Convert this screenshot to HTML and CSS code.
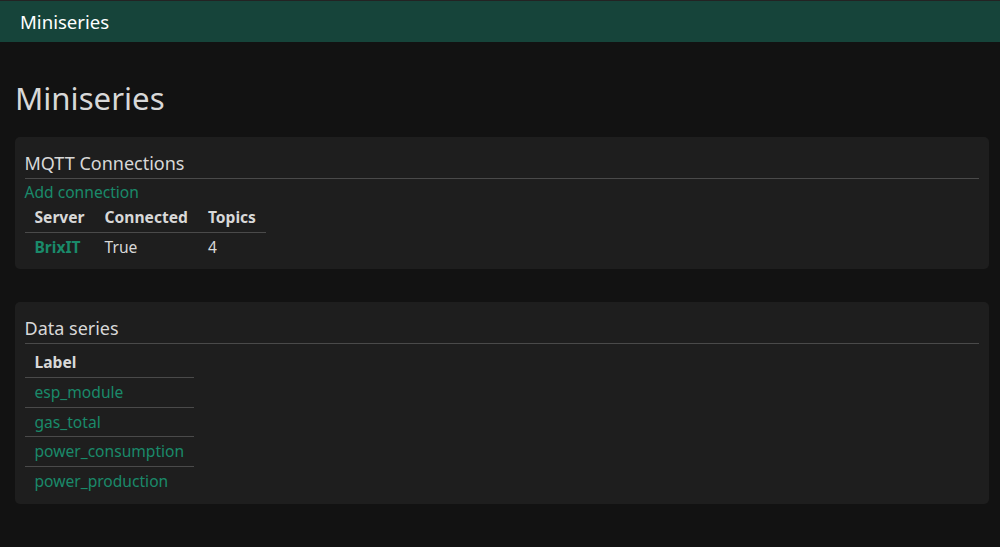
FILE: index.html
```html
<!DOCTYPE html>
<html>
<head>
<meta charset="utf-8">
<link rel="stylesheet" href="styles.css">
</head>
<body>
<header class="topbar"><span class="brand">Miniseries</span></header>
<main class="content">
  <h1 class="title">Miniseries</h1>
  <section class="card">
    <h2 class="card-title">MQTT Connections</h2>
    <a class="link add" href="#">Add connection</a>
    <table class="tbl">
      <thead><tr><th>Server</th><th>Connected</th><th>Topics</th></tr></thead>
      <tbody><tr><td><a class="link strong" href="#">BrixIT</a></td><td>True</td><td>4</td></tr></tbody>
    </table>
  </section>
  <section class="card">
    <h2 class="card-title">Data series</h2>
    <table class="tbl lines">
      <thead><tr><th>Label</th></tr></thead>
      <tbody>
        <tr><td><a class="link" href="#">esp_module</a></td></tr>
        <tr><td><a class="link" href="#">gas_total</a></td></tr>
        <tr><td><a class="link" href="#">power_consumption</a></td></tr>
        <tr><td><a class="link" href="#">power_production</a></td></tr>
      </tbody>
    </table>
  </section>
</main>
</body>
</html>
```
FILE: styles.css
```css
html, body { margin: 0; padding: 0; }
body {
  background: #121212;
  color: #d8d8d8;
  font-family: "Noto Sans", "Open Sans", sans-serif;
  font-size: 15.6px;
  line-height: 24px;
}
.topbar {
  height: 41px;
  border-top: 1px solid #232323;
  background: #16443a;
  display: flex;
  align-items: center;
  padding-left: 20px;
}
.brand { color: #ffffff; font-size: 18.6px; }
.content { padding: 37px 11px 20px 15px; }
.title {
  margin: 0 0 20px 0;
  font-size: 31.2px;
  font-weight: 400;
  line-height: 38px;
  color: #d8d8d8;
}
.card {
  background: #1e1e1e;
  border-radius: 5px;
  padding: 10px 10px 7px 9.5px;
  margin-bottom: 33px;
}
.card-title {
  margin: 0;
  font-size: 18px;
  font-weight: 400;
  line-height: 27px;
  padding-top: 3px;
  padding-bottom: 1px;
  border-bottom: 1px solid #4a4a4a;
  color: #d8d8d8;
}
.link { color: #1a8a6a; text-decoration: none; }
.add { display: inline-block; padding-top: 1px; }
.link.strong { font-weight: 700; }
.tbl { border-collapse: collapse; }
.tbl th { text-align: left; font-weight: 700; padding: 1px 10px 3px 10px; border-bottom: 1px solid #4a4a4a; }
.tbl td { padding: 2px 10px 3px 10px; }
.tbl.lines { margin-top: 4px; margin-bottom: 2px; }
.tbl.lines th { padding: 2px 10px 3px 10px; }
.tbl.lines tbody tr:not(:last-child) td { border-bottom: 1px solid #4a4a4a; }
.tbl.lines td { padding: 2px 10px 2.5px 10px; }
```
